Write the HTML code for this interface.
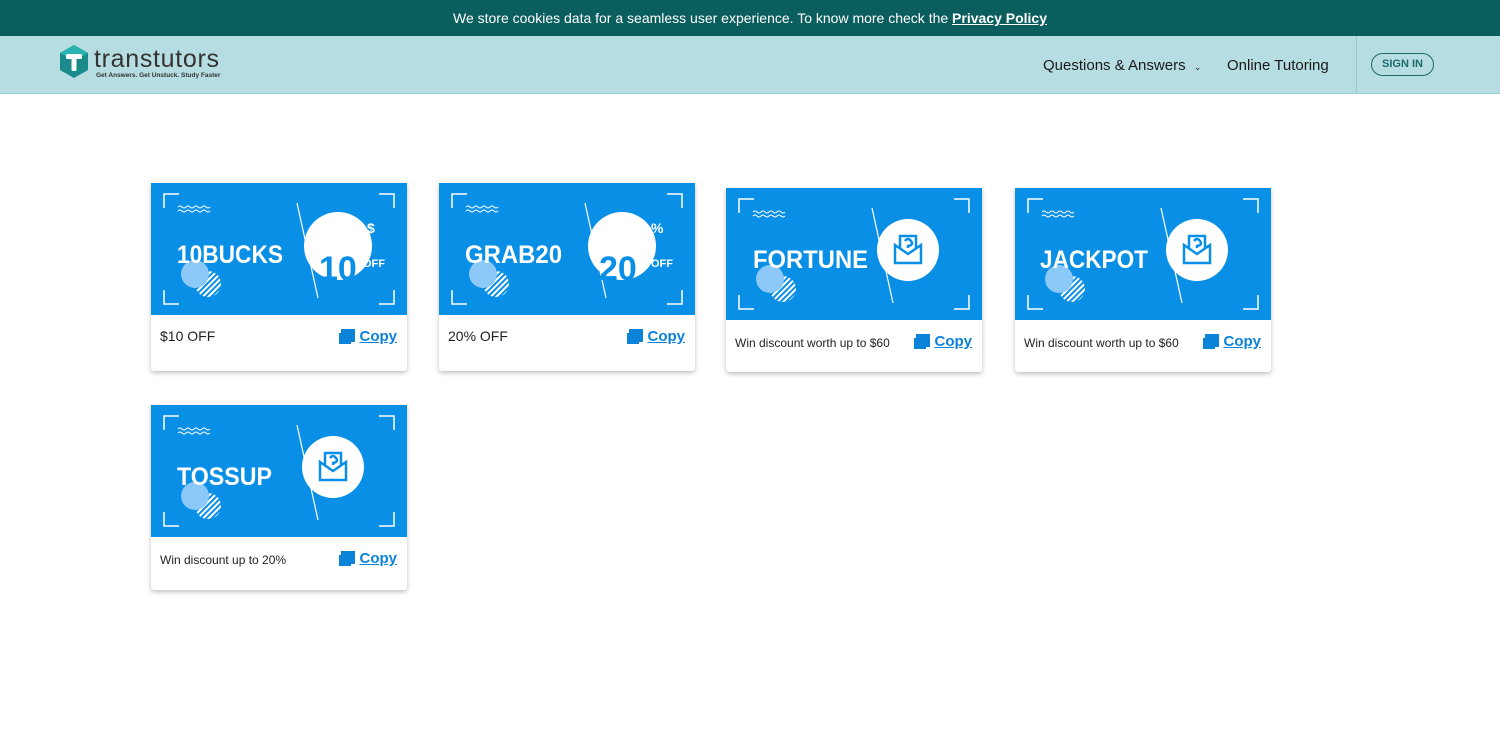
<!DOCTYPE html>
<html><head><meta charset="utf-8"><style>
*{margin:0;padding:0;box-sizing:border-box}
body{width:1500px;height:730px;background:#fff;font-family:"Liberation Sans",sans-serif;position:relative;overflow:hidden}
.top{position:absolute;left:0;top:0;width:1500px;height:36px;background:#0b5e5e;color:#fff;font-size:14px;text-align:center;line-height:36px}
.top u{font-weight:bold}
.nav{position:absolute;left:0;top:36px;width:1500px;height:58px;background:#b6dde1;border-bottom:1px solid #9cc}
.logo{position:absolute;left:59px;top:8px}
.nav .l{position:absolute;top:21px;font-size:15px;color:#1a1a1a}
.sep{position:absolute;left:1356px;top:0;width:1px;height:57px;background:#9cc}
.sign{position:absolute;left:1371px;top:17px;width:63px;height:23px;border:1.5px solid #1d6b6b;border-radius:12px;font-size:11px;font-weight:bold;color:#1d6b6b;text-align:center;line-height:20px}
.card{position:absolute;width:256px;background:#fff;box-shadow:0 2px 5px rgba(0,0,0,.25);border-radius:0 0 3px 3px}
.card svg{display:block}
.ft{position:relative;height:56px}
.ft .t{position:absolute;left:9px;top:13px;font-size:14px;color:#222}
.ft .t.s{font-size:12px;top:16px}
.ft .c{position:absolute;right:10px;top:13px;font-size:15px;font-weight:bold;color:#0a83d9;text-decoration:underline}
.ft .c i{display:inline-block;width:14px;height:13px;background:#0a83d9;margin-right:5px;vertical-align:-1px;box-shadow:-3px 3px 0 -1px #0a83d9}
</style></head><body>
<div class="top">We store cookies data for a seamless user experience. To know more check the <u>Privacy Policy</u></div>
<div class="nav">
<svg class="logo" width="170" height="40" viewBox="0 0 170 40"><polygon points="15,1 29,9 29,26 15,34 1,26 1,9" fill="#1a8a8a"/><polygon points="15,1 29,9 15,17 1,9" fill="#28b2b0"/><rect x="7" y="10" width="16" height="5" rx="1.5" fill="#fff"/><rect x="12.5" y="12" width="5" height="15" rx="1.5" fill="#fff"/><text x="35" y="23" font-family="Liberation Sans" font-size="25" fill="#333" textLength="125">transtutors</text><text x="37" y="33" font-family="Liberation Sans" font-size="6.5" fill="#333" font-weight="bold">Get Answers. Get Unstuck. Study Faster</text></svg>
<div class="l" style="left:1043px">Questions &amp; Answers &nbsp;<span style="font-size:9px">⌄</span></div>
<div class="l" style="left:1227px">Online Tutoring</div>
<div class="sep"></div>
<div class="sign">SIGN IN</div>
</div>

<svg width="0" height="0" style="position:absolute"><defs>
<pattern id="st" width="4" height="4" patternUnits="userSpaceOnUse" patternTransform="rotate(45)"><rect width="2" height="4" fill="#fff"/></pattern>
<g id="bg"><rect width="256" height="132" fill="#0a8fe6"/>
<g stroke="#fff" stroke-width="1.5" fill="none"><path d="M13,25V11H28M228,11H243V25M13,107V121H28M228,121H243V107"/>
<path d="M27,24q2,-2 4,0t4,0t4,0t4,0t4,0t4,0t4,0t4,0" stroke-width="1"/><path d="M27,28q2,-2 4,0t4,0t4,0t4,0t4,0t4,0t4,0t4,0" stroke-width="1"/>
<path d="M146,20L167,115" stroke-width="1.2"/></g>
<circle cx="57" cy="101" r="13" fill="url(#st)"/><circle cx="44" cy="91" r="14" fill="#8cc8f8"/></g>
<g id="env"><circle cx="182" cy="62" r="31" fill="#fff"/><g fill="none" stroke="#0a8fe6" stroke-width="2.5"><path d="M169,57v18h26v-18l-13,9z"/><path d="M174,61v-13h16v13"/><path d="M179,53q3,-4 6,0t-3,5v2"/></g></g>
</defs></svg>

<div class="card" style="left:151px;top:183px"><svg width="256" height="132"><use href="#bg"/><circle cx="187" cy="63" r="34" fill="#fff"/><text x="168" y="97" font-size="34" font-weight="bold" fill="#0a8fe6">10</text><text x="216" y="50" font-size="14" font-weight="bold" fill="#fff">$</text><text x="212" y="84" font-size="11" font-weight="bold" fill="#fff">OFF</text><text x="26" y="80" font-size="25" font-weight="bold" fill="#fff" textLength="106" lengthAdjust="spacingAndGlyphs">10BUCKS</text></svg><div class="ft"><span class="t">$10 OFF</span><span class="c"><i></i>Copy</span></div></div>

<div class="card" style="left:439px;top:183px"><svg width="256" height="132"><use href="#bg"/><circle cx="183" cy="63" r="34" fill="#fff"/><text x="160" y="97" font-size="34" font-weight="bold" fill="#0a8fe6">20</text><text x="212" y="50" font-size="14" font-weight="bold" fill="#fff">%</text><text x="212" y="84" font-size="11" font-weight="bold" fill="#fff">OFF</text><text x="26" y="80" font-size="25" font-weight="bold" fill="#fff" textLength="97" lengthAdjust="spacingAndGlyphs">GRAB20</text></svg><div class="ft"><span class="t">20% OFF</span><span class="c"><i></i>Copy</span></div></div>

<div class="card" style="left:726px;top:188px"><svg width="256" height="132"><use href="#bg"/><use href="#env"/><text x="27" y="80" font-size="25" font-weight="bold" fill="#fff" textLength="115" lengthAdjust="spacingAndGlyphs">FORTUNE</text></svg><div class="ft" style="height:52px"><span class="t s">Win discount worth up to $60</span><span class="c"><i></i>Copy</span></div></div>

<div class="card" style="left:1015px;top:188px"><svg width="256" height="132"><use href="#bg"/><use href="#env"/><text x="25" y="80" font-size="25" font-weight="bold" fill="#fff" textLength="108" lengthAdjust="spacingAndGlyphs">JACKPOT</text></svg><div class="ft" style="height:52px"><span class="t s">Win discount worth up to $60</span><span class="c"><i></i>Copy</span></div></div>

<div class="card" style="left:151px;top:405px"><svg width="256" height="132"><use href="#bg"/><use href="#env"/><text x="26" y="80" font-size="25" font-weight="bold" fill="#fff" textLength="95" lengthAdjust="spacingAndGlyphs">TOSSUP</text></svg><div class="ft" style="height:53px"><span class="t s">Win discount up to 20%</span><span class="c"><i></i>Copy</span></div></div>
</body></html>
